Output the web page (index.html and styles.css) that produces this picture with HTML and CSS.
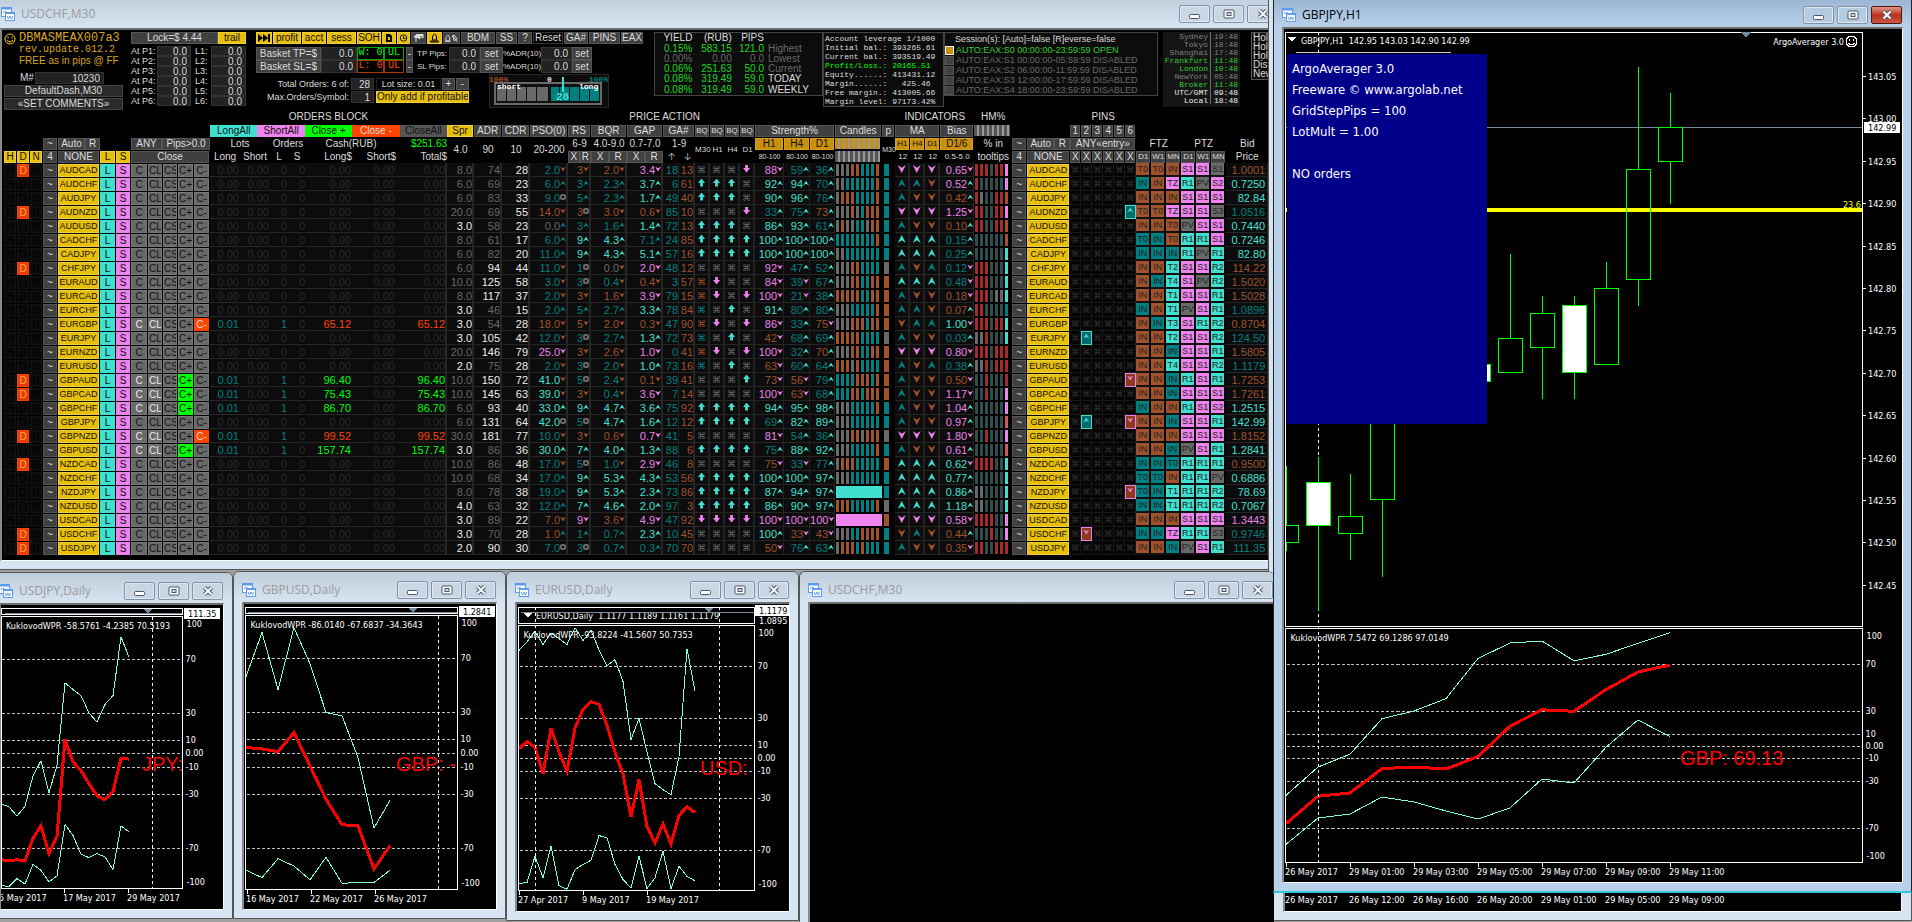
FILE: index.html
```html
<!DOCTYPE html>
<html lang="en">
<head>
  <meta charset="UTF-8" />
  <meta name="viewport" content="width=device-width, initial-scale=1" />
  <title>Forex Dashboard</title>
  <link rel="stylesheet" href="styles.css">
</head>
<body>

  <svg class="defs" aria-hidden="true">
    <symbol id="chartIcon" viewBox="0 0 14 14">
      <rect x="0.5" y="0.5" width="10" height="9" fill="#fff" stroke="#5b9bf0" />
      <path d="M0 1.5h11" stroke="#5b9bf0" stroke-width="2" />
      <path d="M2 6l1.500-2 1 1 1-1" stroke="#5b9bf0" fill="none" />
      <rect x="4.500" y="5.500" width="9" height="8" fill="#fff" stroke="#5b9bf0" />
      <path d="M4 6h10" stroke="#5b9bf0" stroke-width="2" />
      <path d="M6 9l1.500 3 1.500-3 1.500 3 1-3" stroke="#5b9bf0" fill="none" />
    </symbol>
    <symbol id="minIcon" viewBox="0 0 14 12">
      <rect x="1.500" y="6.500" width="10" height="4" rx="1" fill="#fff" stroke="#4d5566" />
    </symbol>
    <symbol id="maxIcon" viewBox="0 0 14 12">
      <rect x="2" y="2" width="10" height="8" rx="1" fill="#fff" stroke="#4d5566" />
      <rect x="5" y="4.500" width="4" height="3" fill="#cfdbe8" stroke="#4d5566" />
    </symbol>
    <symbol id="closeIcon" viewBox="0 0 14 12">
      <path d="M3.500 2.500l7 7m0-7l-7 7" stroke="#4d5566" stroke-width="4" />
      <path d="M3.500 2.500l7 7m0-7l-7 7" stroke="#fff" stroke-width="2" />
    </symbol>
    <symbol id="smiley" viewBox="0 0 12 12">
      <circle cx="6" cy="6" r="5" fill="none" stroke="currentColor" />
      <path d="M4 3.500v2M8 3.500v2M3 7.500q3 3 6 0" fill="none" stroke="currentColor" />
    </symbol>
  </svg>

  <main class="desktop">

    <!-- dashboard -->
    <section class="window win-dash">
      <header class="titlebar"><svg class="app-icon"><use href="#chartIcon" /></svg><h2>USDCHF,M30</h2></header>
      <div class="client dash">
        <div class="top">
          <div class="brand">
            <div class="name"><svg class="smile"><use href="#smiley" /></svg>DBMASMEAX007a3</div>
            <div class="rev">rev.update.012.2</div>
            <div class="free">FREE as in pips @ FF</div>
            <div class="magic"><label for="magic">M#</label><input id="magic" value="10230"></div>
            <button>DefaultDash,M30</button>
            <button>«SET COMMENTS»</button>
          </div>

          <div class="lock">
            <div class="lock-head"><button>Lock=$ 4.44</button><button class="gold">trail</button></div>
            <div class="lock-grid" id="lockGrid"></div>
          </div>

          <div class="controls">
            <div class="toolbar">
              <button class="gold" aria-label="Skip"><svg viewBox="0 0 12 10"><path d="M0 1l5 4-5 4zM5 1l5 4-5 4zM10 1h2v8h-2z" /></svg></button>
              <button class="gold">profit</button>
              <button class="gold">acct</button>
              <button class="gold">sess</button>
              <button class="gold">SOH</button>
              <button class="gold" aria-label="File"><svg viewBox="0 0 12 10"><path d="M3 1h4l2 2v6H3z" /><path d="M5 4h2v3H5z" fill="#e8bf08" /></svg></button>
              <button class="gold" aria-label="Clock"><svg viewBox="0 0 12 10"><circle cx="6" cy="5" r="3.500" fill="none" stroke="#000" /><path d="M6 3v2.500h2" fill="none" stroke="#000" /></svg></button>
              <button class="dim" aria-label="Announce"><svg viewBox="0 0 12 10"><path d="M1 4l3-3h7v4H9V3H8v3H6V5H4v4H3V5z" fill="#ddd" /></svg></button>
              <button class="gold" aria-label="Alarm"><svg viewBox="0 0 12 10"><path d="M4 7V4q0-2 2-3 2 1 2 3v3zM2 8h8v1H2z" fill="none" stroke="#000" /></svg></button>
              <button class="dim" aria-label="Alarms"><svg viewBox="0 0 16 10"><path d="M2 8V5q0-2 2-3 2 1 2 3v3zM1 8.500h6M9 3q2-2 3 0l2 3-3 2zM9 2l5 7" fill="none" stroke="#ddd" /></svg></button>
              <button>BDM</button>
              <button>SS</button>
              <button>?</button>
              <button class="bare">Reset</button>
              <button>GA#</button>
              <button>PINS</button>
              <button>EAX</button>
            </div>
            <div class="basket">
              <button>Basket TP=$</button><input aria-label="Basket TP" value="0.0">
              <output class="win">W: 0</output><output class="win">UL</output>
              <button class="spin" aria-label="Step W">-</button>
              <label for="tpPips">TP Pips:</label><input id="tpPips" value="0.0"><button>set</button>
              <label for="tpAdr">%ADR(10):</label><input id="tpAdr" value="0.0"><button>set</button>

              <button>Basket SL=$</button><input aria-label="Basket SL" value="0.0">
              <output class="lose">L: 0</output><output class="lose">UL</output>
              <button class="spin" aria-label="Step L">-</button>
              <label for="slPips">SL Pips:</label><input id="slPips" value="0.0"><button>set</button>
              <label for="slAdr">%ADR(10):</label><input id="slAdr" value="0.0"><button>set</button>
            </div>
            <div class="limits">
              <div class="limit-grid">
                <label for="maxTotal">Total Orders: 6 of:</label><input id="maxTotal" value="28">
                <div class="lot"><span>Lot size: 0.01</span><button>+</button><button>-</button></div>
                <label for="maxSym">Max.Orders/Symbol:</label><input id="maxSym" value="1">
                <button class="gold">Only add if profitable</button>
              </div>
              <svg class="gauge" viewBox="0 0 120 34">
                <rect x="0.5" y="0.5" width="119" height="33" fill="#0c0c0c" stroke="#262626" />
                <rect x="6" y="9" width="106" height="21" fill="#101010" stroke="#696969" stroke-width="2" />
                <g fill="#696969"><path d="M8 13h9v14H8zM18 13h9v14h-9zM28 13h9v14h-9zM38 13h9v14h-9zM48 13h11v14H48z" /></g>
                <g fill="#008080"><path d="M62 13h8v14h-8zM71 13h9v14h-9zM81 13h9v14h-9zM91 13h9v14h-9zM101 13h9v14h-9z" /></g>
                <path d="M74 3v15" stroke="#40e0d0" stroke-width="2" />
                <text x="0" y="8" fill="#a0522d">100%</text>
                <text x="58" y="8" fill="#eee">0</text>
                <text x="100" y="8" fill="#008080">100%</text>
                <text x="8" y="15" fill="#fff">short</text>
                <text x="90" y="15" fill="#fff">long</text>
                <text x="67" y="26" class="big" fill="#40e0d0">28</text>
              </svg>
            </div>
          </div>

          <table class="yield">
            <tr><th>YIELD</th><th>(RUB)</th><th>PIPS</th><th></th></tr>
            <tr><td>0.15%</td><td>583.15</td><td>121.0</td><td class="g">Highest</td></tr>
            <tr><td class="g">0.00%</td><td class="g">0.00</td><td class="g">0.0</td><td class="g">Lowest</td></tr>
            <tr><td>0.06%</td><td>251.63</td><td>50.0</td><td class="g">Current</td></tr>
            <tr><td>0.08%</td><td>319.49</td><td>59.0</td><td>TODAY</td></tr>
            <tr><td>0.08%</td><td>319.49</td><td>59.0</td><td>WEEKLY</td></tr>
          </table>

          <pre class="account">Account leverage 1/1000
Initial bal.: 393265.61
Current bal.: 393519.49
<b>Profit/Loss.: 20165.51</b>
Equity......: 413431.12
Margin......:   425.46
Free margin.: 413005.66
Margin level: 97173.42%</pre>

          <div class="sessions">
            <div class="head">Session(s): [Auto]=false [R]everse=false</div>
            <label class="open"><input type="checkbox" checked>AUTO:EAX:S0 00:00:00-23:59:59 OPEN</label>
            <label><input type="checkbox">AUTO:EAX:S1 00:00:00-05:59:59 DISABLED</label>
            <label><input type="checkbox">AUTO:EAX:S2 06:00:00-11:59:59 DISABLED</label>
            <label><input type="checkbox">AUTO:EAX:S3 12:00:00-17:59:59 DISABLED</label>
            <label><input type="checkbox">AUTO:EAX:S4 18:00:00-23:59:59 DISABLED</label>
          </div>

          <dl class="clocks">
            <dt>Sydney</dt><dd>19:48</dd>
            <dt>Tokyo</dt><dd>18:48</dd>
            <dt>Shanghai</dt><dd>17:48</dd>
            <dt class="on">Frankfurt</dt><dd class="on">11:48</dd>
            <dt class="on">London</dt><dd class="on">10:48</dd>
            <dt>NewYork</dt><dd>05:48</dd>
            <dt class="on">Broker</dt><dd class="on">11:48</dd>
            <dt class="me">UTC/GMT</dt><dd class="me">09:48</dd>
            <dt class="me">Local</dt><dd class="me">18:48</dd>
          </dl>

          <ul class="side-menu"><li>Hol</li><li>Hol</li><li>Hol</li><li>Dis</li><li>New</li></ul>
        </div>

        <table class="grid">
          <colgroup id="cols"></colgroup>
          <thead>
            <tr class="titles">
              <td colspan="12"></td><th colspan="7">ORDERS BLOCK</th><th colspan="17">PRICE ACTION</th>
              <td></td><th colspan="4">INDICATORS</th><th>HM%</th><td colspan="2"></td><th colspan="6">PINS</th><td colspan="7"></td>
            </tr>
            <tr class="r1">
              <td colspan="12"></td>
              <td colspan="7"><div class="close-all">
                <button class="long">LongAll</button><button class="short">ShortAll</button><button class="plus">Close +</button><button class="minus">Close -</button><button class="all">CloseAll</button>
              </div></td>
              <td><button class="gold">Spr</button></td><td><button>ADR</button></td><td><button>CDR</button></td>
              <td><button>PSO(0)</button></td><td><button>RS</button></td><td><button>BQR</button></td><td><button>GAP</button></td>
              <td colspan="2"><button>GA#</button></td>
              <td><button class="tiny">BQ</button></td><td><button class="tiny">BQ</button></td><td><button class="tiny">BQ</button></td><td><button class="tiny">BQ</button></td>
              <td colspan="3"><button>Strength%</button></td><td><button>Candles</button></td><td><button>p</button></td>
              <td colspan="3"><button>MA</button></td><td><button>Bias</button></td><td><i class="stripes"></i></td><td colspan="2"></td>
              <td><button>1</button></td><td><button>2</button></td><td><button>3</button></td><td><button>4</button></td><td><button>5</button></td><td><button>6</button></td>
              <td colspan="7"></td>
            </tr>
            <tr class="r2">
              <td colspan="3"></td><td><button>~</button></td>
              <td><div class="pair wide"><button>Auto</button><button>R</button></div></td><td colspan="2"></td>
              <td colspan="5"><div class="pair any"><button>ANY</button><button>Pips&gt;0.0</button></div></td>
              <th colspan="2">Lots</th><th colspan="2">Orders</th><th colspan="2">Cash(RUB)</th><th class="sum">$251.63</th>
              <th rowspan="2">4.0</th><th rowspan="2">90</th><th rowspan="2">10</th><th rowspan="2">20-200</th>
              <th>6-9</th><th>4.0-9.0</th><th>0.7-7.0</th><th colspan="2">1-9</th>
              <th rowspan="2" class="tiny">M30</th><th rowspan="2" class="tiny">H1</th><th rowspan="2" class="tiny">H4</th><th rowspan="2" class="tiny">D1</th>
              <td><button class="amber">H1</button></td><td><button class="amber">H4</button></td><td><button class="amber">D1</button></td>
              <td><i class="stripes gold-s"></i></td><th rowspan="2" class="small">M30</th>
              <td><button class="amber tiny">H1</button></td><td><button class="amber tiny">H4</button></td><td><button class="amber tiny">D1</button></td>
              <td><button class="amber">D1/6</button></td><th>% in</th>
              <td><button>~</button></td><td><div class="pair wide"><button>Auto</button><button>R</button></div></td>
              <td colspan="6"><button>ANY«entry»</button></td><th colspan="3">FTZ</th><th colspan="3">PTZ</th><th>Bid</th>
            </tr>
            <tr class="r3">
              <td><button class="gold">H</button></td><td><button class="gold">D</button></td><td><button class="gold">N</button></td>
              <td><button>4</button></td><td><button>NONE</button></td><td><button class="gold">L</button></td><td><button class="gold">S</button></td>
              <td colspan="5"><button>Close</button></td>
              <th>Long</th><th>Short</th><th>L</th><th>S</th><th class="end">Long$</th><th class="end">Short$</th><th class="end">Total$</th>
              <td><div class="pair"><button>X</button><button>R</button></div></td><td><div class="pair"><button>X</button><button>R</button></div></td><td><div class="pair"><button>X</button><button>R</button></div></td>
              <th>🡡</th><th>🡣</th>
              <th class="small">80-100</th><th class="small">80-100</th><th class="small">80-100</th><td><i class="stripes"></i></td>
              <th class="tiny">12</th><th class="tiny">12</th><th class="tiny">12</th><th class="tiny">0.5-5.0</th><th>tooltips</th>
              <td><button>4</button></td><td><button>NONE</button></td>
              <td><button>X</button></td><td><button>X</button></td><td><button>X</button></td><td><button>X</button></td><td><button>X</button></td><td><button>X</button></td>
              <td><button class="tiny">D1</button></td><td><button class="tiny">W1</button></td><td><button class="tiny">MN</button></td><td><button class="tiny">D1</button></td><td><button class="tiny">W1</button></td><td><button class="tiny">MN</button></td>
              <th>Price</th>
            </tr>
          </thead>
          <tbody id="rows"></tbody>
        </table>
      </div>
    </section>

    <section class="window win-jpy">
      <header class="titlebar"><svg class="app-icon"><use href="#chartIcon" /></svg><h2>USDJPY,Daily</h2></header>
      <div class="client"><svg class="chart" id="usdjpy"></svg></div>
    </section>

    <section class="window win-gbp">
      <header class="titlebar"><svg class="app-icon"><use href="#chartIcon" /></svg><h2>GBPUSD,Daily</h2></header>
      <div class="client"><svg class="chart" id="gbpusd"></svg></div>
    </section>

    <section class="window win-eur">
      <header class="titlebar"><svg class="app-icon"><use href="#chartIcon" /></svg><h2>EURUSD,Daily</h2></header>
      <div class="client"><svg class="chart" id="eurusd"></svg></div>
    </section>

    <!-- only its time axis shows under the active chart -->
    <section class="window win-back">
      <div class="client"><div class="axis"><span>26 May 2017</span><span>26 May 12:00</span><span>26 May 16:00</span><span>26 May 20:00</span><span>29 May 01:00</span><span>29 May 05:00</span><span>29 May 09:00</span></div></div>
    </section>

    <section class="window win-blank">
      <header class="titlebar"><svg class="app-icon"><use href="#chartIcon" /></svg><h2>USDCHF,M30</h2></header>
      <div class="client"></div>
    </section>

    <section class="window win-main active">
      <header class="titlebar"><svg class="app-icon"><use href="#chartIcon" /></svg><h2>GBPJPY,H1</h2></header>
      <div class="client">
        <svg class="chart" id="gbpjpy"></svg>
        <div class="note">
          <p>ArgoAverager 3.0</p>
          <p>Freeware © www.argolab.net</p>
          <p>GridStepPips = 100</p>
          <p>LotMult = 1.00</p>
          <p>&nbsp;</p>
          <p>NO orders</p>
        </div>
      </div>
    </section>

  </main>

  <script src="script.js"></script>
</body>
</html>
```
FILE: styles.css
```css
* {
  box-sizing: border-box;
}

body {
  margin: 0;
  background: #a0a0a0;
  color: #ddd;
  font-family: "Liberation Sans", Arial, sans-serif;
  font-size: 10px;
  line-height: 12px;
}

.defs {
  display: none;
}

.desktop {
  position: relative;
  height: 100vh;
  overflow: hidden;
}

/* windows */
.window {
  position: absolute;
  display: flex;
  flex-direction: column;
  padding: 0 8px 8px;
  background: #d7e4f2;
  border: 1px solid #555;
  border-radius: 6px 6px 0 0;
}

.win-dash { left: -8px; top: -6px; width: 1296px; height: 576px; }
.win-jpy { left: -10px; top: 572px; width: 243px; height: 347px; }
.win-gbp { left: 233px; top: 571px; width: 273px; height: 348px; }
.win-eur { left: 506px; top: 571px; width: 293px; height: 350px; }
.win-blank { left: 799px; top: 571px; width: 475px; height: 370px; padding-right: 0; border-right: 0; }
.win-back { left: 1268px; right: 0; top: -10px; bottom: 1px; padding: 0 9px 8px 14px; }
.win-main { left: 1273px; right: 0; top: -4px; height: 897px; }

.titlebar {
  display: flex;
  flex: 0 0 30px;
  align-items: center;
  gap: 6px;
  margin: 0 -8px;
  padding: 5px 9px 0 8px;
  border-radius: 6px 6px 0 0;
  background: linear-gradient(#bfcddb, #d7e4f2);
}

.win-dash .titlebar {
  flex-basis: 33px;
}

.win-blank .titlebar {
  margin-right: 0;
  padding-right: 1px;
}

.titlebar h2 {
  flex: 1;
  margin: 0;
  color: #9a9a9a;
  font: 12px/16px "Open Sans", "Noto Sans", sans-serif;
}

.app-icon {
  width: 14px;
  height: 14px;
}

.win-buttons {
  display: flex;
  gap: 3px;
}

.win-buttons button {
  display: flex;
  align-items: center;
  justify-content: center;
  width: 31px;
  height: 18px;
  border: 1px solid #8291a8;
  border-radius: 2px;
  background: #c9d6e4;
  box-shadow: inset 0 0 0 1px #dfe8f2;
}

.win-buttons svg {
  width: 14px;
  height: 12px;
}

.client {
  position: relative;
  flex: 1;
  min-height: 0;
  overflow: hidden;
  background: #000;
  border: 1px solid #fff;
  border-top: 2px solid #6e6e6e;
  border-left: 2px solid #8a8a8a;
}

.win-blank .client {
  border-right: 0;
}

.window.active {
  background: #b9d1ea;
  border-color: #222;
  border-bottom: 2px solid #30c8e0;
}

.active .titlebar {
  background: linear-gradient(#98b3d1, #b9d1ea);
}

.active .titlebar h2 {
  color: #000;
}

.active .win-buttons button {
  background: #b5cbe2;
}

.active .win-buttons button:last-child {
  border-color: #5a1410;
  background: linear-gradient(#e09a8c, #b8321c 50%, #c85840);
  box-shadow: none;
}

.chart {
  display: block;
  width: 100%;
  height: 100%;
  shape-rendering: crispEdges;
  font-family: "DejaVu Sans Condensed", "Noto Sans", sans-serif;
  font-size: 9px;
}

.chart .label {
  font-family: "Liberation Sans", Arial, sans-serif;
  font-size: 20px;
  fill: #f00;
}

.note {
  position: absolute;
  left: 3px;
  top: 25px;
  width: 200px;
  height: 370px;
  padding: 4px 5px;
  background: #00008b;
  color: #fff;
  font: 13px/21px "DejaVu Sans Condensed", "Noto Sans", sans-serif;
}

.note p {
  margin: 0;
  white-space: nowrap;
}

.win-back .client {
  display: flex;
  align-items: flex-end;
}

.axis {
  display: flex;
  color: #fff;
  font: 9px/21px "DejaVu Sans Condensed", "Noto Sans", sans-serif;
}

.axis span {
  width: 64px;
  white-space: nowrap;
}

/* dashboard controls */
button, input, output {
  margin: 0;
  padding: 0;
  border: 1px solid #555;
  border-radius: 0;
  background: #404040;
  color: #ddd;
  font-family: inherit;
  font-size: 10px;
  line-height: 10px;
  white-space: nowrap;
  overflow: hidden;
}

input {
  width: 100%;
  height: 100%;
  min-width: 0;
  padding-right: 3px;
  border-color: #333;
  background: #222;
  text-align: right;
}

button.gold {
  border-color: #f0d040;
  background: #e8bf08;
  color: #111;
}

button.amber {
  border-color: #d8a020;
  background: #c8900c;
  color: #111;
}

.dash {
  margin-left: -1px;
}

.top {
  display: flex;
  align-items: flex-start;
  height: 80px;
  padding: 2px 0 0 2px;
}

.top > * {
  flex-shrink: 0;
}

.brand {
  display: flex;
  flex-direction: column;
  width: 119px;
  margin-right: 8px;
  color: #daa520;
}

.brand .name {
  display: flex;
  align-items: center;
  gap: 3px;
  height: 13px;
  font: 12px/13px "Liberation Mono", monospace;
}

.smile {
  width: 12px;
  height: 12px;
  color: #ffd700;
}

.brand .rev {
  height: 10px;
  padding-left: 15px;
  font: 10px/9px "Liberation Mono", monospace;
}

.brand .free {
  height: 17px;
  padding-left: 15px;
}

.magic {
  display: flex;
  width: 100px;
  height: 12px;
  margin-bottom: 1px;
  padding-left: 16px;
  gap: 1px;
  color: #ddd;
}

.brand button {
  height: 12px;
  margin-bottom: 1px;
  border-color: #444;
  background: #2a2a2a;
}

.lock {
  width: 115px;
  margin-right: 10px;
}

.lock-head {
  display: grid;
  grid-template-columns: 87px 28px;
  height: 12px;
  margin-bottom: 2px;
}

.lock-grid {
  display: grid;
  grid-template-columns: 26px 34px 20px 35px;
  grid-auto-rows: 10px;
  font-size: 9px;
  line-height: 11px;
  white-space: nowrap;
}

.lock-grid label:nth-of-type(even) {
  padding-left: 4px;
}

.controls {
  width: 388px;
  margin-right: 10px;
}

.toolbar {
  display: grid;
  grid-template-columns: 17px 29px 25px 30px 25px 15px 14px 16px 16px 18px 35px 22px 15px 31px 25px 32px 23px;
  height: 12px;
  margin-bottom: 3px;
}

.toolbar button {
  margin-right: 1px;
}

.toolbar svg {
  display: block;
  width: 100%;
  height: 10px;
}

.toolbar .bare {
  border-color: #333;
  background: #000;
}

.basket {
  display: grid;
  grid-template-columns: 65px 36px 27px 20px 13px 32px 31px 23px 38px 31px 20px;
  grid-auto-rows: 13px;
}

.basket label {
  font-size: 8px;
  line-height: 13px;
}

.basket output {
  border-color: #0a0;
  background: #000;
  color: #0f0;
  font-family: "Liberation Mono", monospace;
  text-align: center;
}

.basket output.lose {
  border-color: #a30;
  color: #ff4500;
}

.basket .spin {
  margin: 0 4px 0 2px;
}

.limits {
  display: flex;
  gap: 20px;
}

.limit-grid {
  display: grid;
  grid-template-columns: 93px 23px 93px;
  grid-auto-rows: 12px;
  gap: 1px 2px;
  padding-top: 5px;
  text-align: right;
  font-size: 9px;
  line-height: 12px;
}

.lot {
  display: grid;
  grid-template-columns: 65px 13px 13px;
  gap: 1px;
}

.lot span {
  border: 1px solid #222;
  line-height: 10px;
  text-align: center;
}

.gauge {
  width: 120px;
  height: 34px;
  margin-top: 1px;
  font: bold 8px "Liberation Mono", monospace;
}

.gauge .big {
  font-size: 11px;
}

.yield {
  width: 169px;
  height: 64px;
  border: 1px solid #444;
  border-collapse: collapse;
  background: #0c0c0c;
  color: #1fd71f;
  line-height: 10px;
}

.yield th, .yield td {
  padding: 0;
  text-align: right;
  font-weight: normal;
}

.yield th {
  color: #ddd;
}

.yield td:last-child {
  padding-left: 4px;
  color: #ddd;
  text-align: left;
}

.yield tr td.g {
  color: #696969;
}

.account {
  width: 121px;
  height: 75px;
  margin: 0;
  padding: 1px 0 0 1px;
  border: 1px solid #444;
  background: #0c0c0c;
  font: 8px/9px "Liberation Mono", monospace;
}

.account b {
  color: #0f0;
  font-weight: normal;
}

.sessions {
  width: 214px;
  height: 64px;
  border: 1px solid #444;
  background: #0c0c0c;
  color: #696969;
  font-size: 9px;
  line-height: 10px;
}

.sessions .head {
  padding-left: 10px;
  color: #ddd;
  line-height: 12px;
}

.sessions label {
  display: flex;
  align-items: center;
  gap: 2px;
}

.sessions .open {
  color: #32cd32;
}

.sessions input {
  width: 9px;
  height: 9px;
  padding: 0;
  appearance: none;
  border-color: #555;
  background: #404040;
}

.sessions input:checked {
  border-color: #eee;
  background: #c8900c;
}

.clocks {
  display: grid;
  grid-template-columns: 45px 32px;
  grid-auto-rows: 8px;
  height: 75px;
  margin: 0 11px 0 5px;
  background: #151515;
  color: #808080;
  font: 8px/9px "Liberation Mono", monospace;
}

.clocks dt {
  text-align: right;
}

.clocks dd {
  margin: 0 0 0 2px;
  padding-left: 3px;
  border-left: 1px solid #696969;
}

.clocks .on { color: #32cd32; }
.clocks .me { color: #eee; }

.side-menu {
  width: 40px;
  height: 48px;
  margin: 0;
  padding: 0 1px;
  border: 1px solid #555;
  background: #0c0c0c;
  list-style: none;
  line-height: 9px;
}

/* pair table */
.grid {
  width: 1264px;
  margin-left: 2px;
  border-spacing: 0;
  table-layout: fixed;
  font-size: 10px;
}

.grid th, .grid td {
  height: 13px;
  padding: 0;
  overflow: hidden;
  font-weight: normal;
  line-height: 12px;
  white-space: nowrap;
}

.grid thead th {
  overflow: visible;
  text-align: center;
}

.grid .titles th, .grid .titles td {
  height: 14px;
}

.grid button {
  display: block;
  width: calc(100% - 1px);
  height: 12px;
  text-align: center;
}

.grid .tiny {
  font-size: 8px;
}

.grid .small {
  font-size: 7px;
}

.grid thead .end {
  text-align: right;
}

.grid thead .sum {
  color: #0f0;
  text-align: right;
}

.close-all, .pair {
  display: flex;
}

.pair.wide button:first-child { flex: 0 0 27px; }
.pair.any button:first-child { flex: 0 0 31px; }

.grid .long { border-color: #40e0d0; background: #40e0d0; color: #111; }
.grid .short { border-color: #ee82ee; background: #ee82ee; color: #111; }
.grid .plus { border-color: #0f0; background: #0f0; color: #111; }
.grid .minus { border-color: #ff4500; background: #ff4500; color: #ddd; }
.grid .all { color: #111; background: #555; }

.stripes {
  display: block;
  width: calc(100% - 2px);
  height: 11px;
  background: repeating-linear-gradient(90deg, #555 0 3px, #999 3px 5px);
}

.stripes.gold-s {
  background: repeating-linear-gradient(90deg, #c8900c 0 3px, #999 3px 5px);
}

tbody .num {
  border-right: 1px solid #222;
  border-bottom: 1px solid #262626;
  background: #0c0c0c;
  font-size: 11px;
  text-align: right;
}

.grid tbody td {
  height: 14px;
}

.grid tbody button {
  height: 13px;
  line-height: 11px;
}

.grid tbody .sym {
  font-size: 9px;
}

tbody .num.end {
  border-right: 2px solid #262626;
}

tbody .num.order {
  border-right-color: #0c0c0c;
}

.grid .hdn { border-color: #111; background: #0c0c0c; color: #000; }
.grid .hdn.lit { border-color: #ff4500; background: #e83808; color: #ffb040; }
.grid .off { border-color: #787878; background: #696969; color: #111; }
.grid .off.lit { color: #eee; }

.c-w { color: #eee; }
.c-g { color: #696969; }
.c-t { color: #008080; }
.c-T { color: #40e0d0; }
.c-o { color: #a0522d; }
.c-v { color: #ee82ee; }
.c-z { color: #2a2a2a; }
.c-p { color: #0f0; }
.c-m { color: #ff4500; }

.mark {
  display: inline-block;
  width: 6px;
  height: 5px;
  margin-bottom: 2px;
  background: currentColor;
}

.up { clip-path: polygon(50% 0, 100% 100%, 50% 65%, 0 100%); }
.down { clip-path: polygon(50% 100%, 100% 0, 50% 35%, 0 0); }
.ring { height: 6px; border: 2px double #696969; background: none; border-radius: 2px; }

tbody .ico {
  border-right: 2px solid #222;
  border-bottom: 1px solid #262626;
  background: #0c0c0c;
  font: 9px "DejaVu Sans", sans-serif;
  text-align: center;
}

.arrow-up, .arrow-down {
  display: inline-block;
  width: 7px;
  height: 8px;
  background: currentColor;
  clip-path: polygon(50% 0, 100% 55%, 70% 55%, 70% 100%, 30% 100%, 30% 55%, 0 55%);
}

.arrow-down {
  clip-path: polygon(50% 100%, 100% 45%, 70% 45%, 70% 0, 30% 0, 30% 45%, 0 45%);
}

tbody .ico .mark {
  width: 8px;
  height: 8px;
  margin: 1px 0 0;
}

.bars {
  display: flex;
  gap: 2px;
  height: 12px;
  padding-left: 1px;
}

.bars i { width: 3px; }
.bars.one i { width: 5px; margin-left: 1px; }
.bars.full i { width: 46px; }

.b-g { background: #696969; }
.b-t { background: #008080; }
.b-T { background: #40e0d0; }
.b-o { background: #a0522d; }
.b-v { background: #ee82ee; }
.b-r { background: #a52a2a; }
.b-s { background: #2f4f4f; }
.b-c { background: #cd5c5c; }

tbody .pin {
  background: #050505;
  border-right: 1px solid #181818;
  border-bottom: 1px solid #181818;
  color: #303030;
  font: 9px "DejaVu Sans", sans-serif;
  text-align: center;
}

tbody .up-pin { outline: 1px solid #40e0d0; outline-offset: -1px; background: #006b6b; color: #40e0d0; }
tbody .down-pin { outline: 1px solid #ee82ee; outline-offset: -1px; background: #8b3a1a; color: #ee82ee; }

.zone {
  border-right: 2px solid #000;
  border-bottom: 2px solid #111;
  color: #222;
  font-size: 9px;
  text-align: center;
}

tbody .price {
  padding-right: 2px;
}
```
FILE: script.js
```js
// window buttons
document.querySelectorAll('.titlebar').forEach(bar => {
  const box = document.createElement('div');
  box.className = 'win-buttons';
  box.innerHTML = ['min', 'max', 'close'].map(n =>
    `<button aria-label="${n}"><svg><use href="#${n}Icon" /></svg></button>`).join('');
  bar.append(box);
});

// lock levels
let lock = '';
for (let i = 1; i <= 6; i++) {
  lock += `<label for="p${i}">At P${i}:</label><input id="p${i}" value="0.0">`;
  lock += `<label for="l${i}">L${i}:</label><input id="l${i}" value="0.0">`;
}
document.getElementById('lockGrid').innerHTML = lock;

// pair table
const widths = [13, 13, 13, 15, 42, 16, 15, 17, 15, 15, 16, 16,
  30, 30, 18, 18, 46, 44, 51,
  27, 28, 28, 38, 23, 36, 36, 16, 16, 15, 15, 15, 15,
  29, 26, 25, 47, 13, 15, 15, 15, 34, 38,
  15, 43, 11, 11, 11, 11, 11, 11, 15, 15, 15, 15, 15, 15, 42];
document.getElementById('cols').innerHTML = widths.map(w => `<col style="width:${w}px">`).join('');

// symbol, values, bq, strength, candles, p, ma, bias, heat, pins, zones, bid, cash
const pairs = [
  'AUDCAD! g8.0 g74 w28 t2.0vo o3v o2.0v v3.4v 18 13 xxxd v88v t59^ t36^ gggoottto t vvv v0.65v rrrsrrv ...... oT0,oT0,oIN,vS1,vS1,gS1 o1.0001',
  'AUDCHF g6.0 g69 w23 t6.0^ t3^ t2.3^ T3.7^ 6 61 uuux T92^ T94^ t70^ ggtttttto t tto v0.52^ rsssssv ...... tIN,oIN,vTZ,TR1,gPV,vS2 T0.7250',
  'AUDJPY g6.0 g83 w33 t9.0*g t5^ t2.3^ T1.7^ 49 40 uuux T90^ T96^ t76^ goootttto t too o0.42^ rgssrro ...... oIN,oIN,oIN,vS1,vS1,vS1 T82.84',
  'AUDNZD! g20.0 g69 w55 o14.0v o3*g o3.0v o0.6v 85 10 xxxd t33^ t75^ o73^ gggogtooo t vvv v1.25v rrssrrv .....U oT0,oT0,vTZ,vS1,vS1,gS3 t1.0516',
  'AUDUSD w3.0 g58 w23 g0.0^t t3^ t1.6^ T1.4^ 72 13 uuux T86^ T93^ t61^ goggttgoo t too o0.10^ rrssrro ...... oIN,oIN,oT0,gPV,vS1,vS1 T0.7440',
  'CADCHF g8.0 g61 w17 t6.0^ T9^ T4.3^ t7.1^ 24 85 uuuu T100^ T100^ T100^ tttttttto t TTT t0.15^ sssssso ...... tT0,tIN,oT0,TR1,TR1,vS1 T0.7246',
  'CADJPY g6.0 g82 w20 t11.0^ T9^ T4.3^ T5.1^ 57 16 uuuu T100^ T100^ T100^ ggttttttt t TTT t0.25^ ssssssT ...... tIN,tIN,tIN,TR1,gPV,TR1 T82.80',
  'CHFJPY! g6.0 w94 w44 t11.0vo t1*g g0.0vo v2.0v 48 12 xxxx v92v t47^ t52^ gggootttt g tot t0.12v rrrsssT ...... oIN,oIN,TT2,vS1,vS1,TR2 o114.22',
  'EURAUD g10.0 w125 w58 t3.0vo t3*g t0.4vo o0.4v 3 57 odxx v84v t39v t67^ gggoottoo o TTT t0.48v rrrsssT ...... oIN,tIN,TT4,vS1,gPV,TR2 o1.5020',
  'EURCAD g8.0 w117 w37 t2.0vo o3v o1.6v v3.9v 79 15 odxd v100v t21v t38^ ooooottoo o too o0.18v rrrsggT ...... oIN,oIN,TT1,vS1,vS1,TR1 o1.5028',
  'EURCHF w3.0 g46 w15 t2.0^ t5^ t2.7^ T3.3^ 78 84 txux T91^ t80^ t80^ gggttttto o tto o0.07^ rrsssst ...... tIN,oIN,TT1,gPV,vS1,TR1 t1.0896',
  'EURGBP w3.0 g54 w28 o18.0v o5v o2.0v o0.3v 47 90 odxd v86v t33^ o75v gggoootoo o ott T1.00v rrrsrrT ...... oIN,tIN,TT3,vS1,TR1,TR2 o0.8704 -65.12',
  'EURJPY w3.0 w105 w42 t12.0vo t3*g t2.7^ T1.3^ 72 73 txux o42v t68^ t69^ oooootttt g too t0.03^ ggrsssT .U.... oIN,oIN,TT2,vS1,vS1,TR2 t124.50',
  'EURNZD g20.0 w146 w79 v25.0v o3v o2.6v v1.0v 0 41 odxd v100v t32^ o70^ gggoottoo o vvv v0.80v rrrsrrr ...... oIN,oIN,tIN,vS1,vS1,TR1 o1.5805',
  'EURUSD w2.0 g75 w28 t2.0vo t3*g t2.0vo T1.0^ 73 16 txux o63v t60^ t64^ ooogotttt o tot t0.38^ ggrsrrr ...... oIN,oIN,TT4,vS1,vS1,TR2 t1.1179',
  'GBPAUD! g10.0 w150 w72 T41.0vo t5*g t2.4vo o0.1v 39 41 xxxu o73v o56v t79^ ttttoooto o too o0.50v ssrsssr .....D oIN,oIN,tIN,TR1,vS1,TR1 o1.7253 +96.40',
  'GBPCAD! g10.0 w145 w63 T39.0vo o3v t0.4vo v3.6v 7 14 xxxx v100v o63v t68^ tttootooo o too v1.17v ssrsssv ...... oIN,oIN,tIN,vS1,vS1,vS1 o1.7261 +75.43',
  'GBPCHF g6.0 w93 w40 T33.0^ T9^ T4.7^ T3.6^ 75 92 uuuu T94^ T95^ T98^ gggttttto t too v1.04^ ssssssv ...... tIN,oIN,oIN,TR1,vS1,vS2 T1.2515 +86.70',
  'GBPJPY g6.0 w131 w64 T42.0*g t5*g T4.7^ T1.6^ 12 12 uuuu t69^ T82^ T89^ gggtttttt t too v0.97^ ssssssc .U...D oIN,oIN,tIN,vS1,vS1,TR1 T142.99',
  'GBPNZD! g30.0 w181 w77 t10.0vo o3v o0.6v v0.7v 41 5 xxxx v81v t54^ t36^ gggoogooo g vvv v1.80v ssrsssv ...... oIN,oIN,oIN,vS1,vS1,vS1 o1.8152 -99.52',
  'GBPUSD w3.0 g86 w36 T30.0^ T7^ T4.0^ T1.3^ 88 6 uuuu t75^ T88^ T92^ gggttttto t too v0.61^ ssssssc ...... oIN,oIN,tIN,gPV,vS1,TR1 T1.2841 +157.74',
  'NZDCAD! g10.0 g86 w48 t17.0vo t5*g t1.0vo v2.9v 46 8 xxxx o75v t33v t77^ gooottttto o TTT T0.62v rrrrssT ...... tIN,tIN,tT0,TR1,TR1,TR1 o0.9500',
  'NZDCHF g10.0 g68 w34 t17.0^ T9^ T5.3^ T4.3^ 53 56 uuuu T100^ T100^ T97^ gggtttttt t TTT T0.77^ ssssssT ...... tT0,tT0,oIN,TR1,TR1,gPV T0.6886',
  'NZDJPY g8.0 g78 w38 t19.0^ T9^ T5.3^ T2.3^ 73 86 uuuu T87^ T94^ T97^ T t TTT T0.86^ ggssssT .....D tT0,tIN,TT1,TR1,TR1,TR2 T78.69',
  'NZDUSD w4.0 g63 w32 t12.0^ T7^ T4.6^ T2.0^ 97 3 uuuu T86^ T90^ T97^ ooottttto g TTT T1.18^ ggssssT ...... tIN,tIN,TT1,TR1,TR1,TR2 T0.7067',
  'USDCAD w3.0 g89 w22 o7.0v v9v o3.6v v4.9v 47 92 dddd v100v v100v v100v v o vvv v0.58v rrrrssv ...... oIN,oIN,oIN,vS1,vS1,vS1 v1.3443',
  'USDCHF! w3.0 g70 w28 o1.0^t t1^ t0.7^ T2.3^ 10 45 xxxx T100^ o33v o43v gggttoooo t oto o0.44^ sssrssv .D.... tIN,tIN,vTZ,TR1,TR1,gS3 t0.9746',
  'USDJPY! w2.0 w90 w30 t7.0*g t3*g t0.7^ t0.3^ 70 70 xxxx o50v t76^ t63^ goootottt t too o0.35v rrssrrr ...... oIN,oIN,tIN,gPV,vS1,TR1 t111.35'
];

const shape = { '^': 'up', 'v': 'down', '*': 'ring' };

// "t2.0vo" = teal value, down mark, orange mark
function num(token, byDirection, extra = '') {
  const [, color, value, mark, own] = token.match(/^([a-zA-Z])([\d.]+)([v^*]?)(\w?)$/);
  let tint = own || color;
  if (byDirection) tint = mark === '^' ? 'T' : 'v';
  const tail = mark ? `<i class="mark ${shape[mark]} c-${tint}"></i>` : '';
  return `<td class="num ${extra}"><span class="c-${color}">${value}</span>${tail}</td>`;
}

function order(value, color, extra = 'order') {
  return `<td class="num ${extra} c-${color}">${value}</td>`;
}

function bars(codes, cls = '') {
  return `<td><div class="bars ${cls}">${[...codes].map(c => `<i class="b-${c}"></i>`).join('')}</div></td>`;
}

function bq(c) {
  if (c === 'u') return '<td class="ico c-T"><i class="arrow-up"></i></td>';
  if (c === 'd') return '<td class="ico c-v"><i class="arrow-down"></i></td>';
  return `<td class="ico c-${c === 'x' ? 'g' : c}">⌘</td>`;
}

function pin(c) {
  if (c === 'U') return '<td class="pin up-pin"><i class="mark up"></i></td>';
  if (c === 'D') return '<td class="pin down-pin"><i class="mark down"></i></td>';
  return '<td class="pin">⌘</td>';
}

document.getElementById('rows').innerHTML = pairs.map(line => {
  const f = line.split(' ');
  const lit = f[0].endsWith('!') ? 'lit' : '';
  const sym = f[0].replace('!', '');
  const cash = f[22];
  const win = cash && cash[0] === '+';
  const col = cash ? (win ? 'p' : 'm') : 'z';
  const sum = cash ? cash.slice(1) : '0.00';
  const on = cash ? 'lit' : '';
  const teal = cash ? 't' : 'z';

  let html = `<td><button class="hdn">H</button></td><td><button class="hdn ${lit}">D</button></td><td><button class="hdn">N</button></td>`;
  html += `<td><button>~</button></td><td><button class="gold sym">${sym}</button></td>`;
  html += '<td><button class="long">L</button></td><td><button class="short">S</button></td>';
  html += `<td><button class="off ${on}">C</button></td><td><button class="off ${on}">CL</button></td><td><button class="off">CS</button></td>`;
  html += `<td><button class="${win ? 'plus' : 'off'}">C+</button></td><td><button class="${cash && !win ? 'minus' : 'off'}">C-</button></td>`;
  html += order(cash ? '0.01' : '0.00', teal) + order('0.00', 'z');
  html += order(cash ? 1 : 0, teal) + order(0, 'z');
  html += order(sum, col) + order('0.00', 'z') + order(sum, col, 'end');
  html += f.slice(1, 8).map(t => num(t, false, 'end')).join('');
  html += num('t' + f[8]) + num('o' + f[9], false, 'end');
  html += [...f[10]].map(bq).join('');
  html += f.slice(11, 14).map(t => num(t, true)).join('');
  html += bars(f[14].slice(0, 9), f[14].length === 1 ? 'full' : '') + bars(f[15], 'one');
  html += [...f[16]].map(c => `<td class="ico c-${c}"><i class="mark ${/t/i.test(c) ? 'up' : 'down'}"></i></td>`).join('');
  html += num(f[17], true) + bars(f[18]);
  html += `<td><button>~</button></td><td><button class="gold sym">${sym}</button></td>`;
  html += [...f[19]].map(pin).join('');
  html += f[20].split(',').map(z => `<td class="zone b-${z[0]}">${z.slice(1)}</td>`).join('');
  html += num(f[21], false, 'price');
  return `<tr>${html}</tr>`;
}).join('');

// charts
const levels = [70, 30, 10, 0, -10, -30, -70];

function text(x, y, s, fill = '#fff', attr = '') {
  return `<text x="${x}" y="${y}" fill="${fill}" ${attr}>${s}</text>`;
}

function wpr(id, o) {
  const y = v => o.zero - v * o.unit;
  const line = (data, color, w) =>
    `<polyline points="${data.map((v, i) => `${o.x0 + i * o.step},${y(v).toFixed(1)}`).join(' ')}" fill="none" stroke="${color}" stroke-width="${w}" />`;
  let s = `<clipPath id="${id}Clip"><rect x="${o.left}" y="${o.top}" width="${o.right - o.left}" height="${o.bottom - o.top}" /></clipPath>`;
  s += o.before || '';
  s += `<g clip-path="url(#${id}Clip)">`;
  levels.forEach(v => {
    s += `<path d="M${o.left + 1} ${Math.round(y(v)) + 0.5}H${o.right}" stroke="#c0c0c0" stroke-dasharray="3 2" />`;
  });
  s += line(o.high, '#7fffd4', 1) + line(o.low, '#7fffd4', 1) + line(o.mid, '#f00', 3);
  s += text(o.labelX, o.labelY, o.label, '#f00', 'class="label"');
  s += '</g>';
  o.vlines.forEach(x => {
    s += `<path d="M${x} ${o.vtop || o.top}V${o.bottom}" stroke="#fff" stroke-dasharray="3 3" />`;
  });
  s += text(o.left + 5, o.top + 12, o.caption);
  s += `<rect x="${o.left}" y="${o.top}" width="${o.right - o.left}" height="${o.bottom - o.top}" fill="none" stroke="#fff" />`;
  s += `<rect x="${o.left}" y="3.5" width="${o.right - o.left}" height="${o.top - 5.5}" fill="none" stroke="#fff" />`;
  s += text(o.right + 4, o.top + 10, 100) + text(o.right + 4, o.bottom - 4, -100);
  levels.forEach(v => {
    s += text(o.right + 3, Math.round(y(v)) + 3, v === 0 ? '0.00' : v);
  });
  o.dates.forEach((d, i) => {
    s += text(o.dateX + i * 64, o.bottom + 12, d);
    s += `<path d="M${o.dateX + 1 + i * 64} ${o.bottom}v4" stroke="#fff" />`;
  });
  s += o.after || '';
  document.getElementById(id).innerHTML = s;
}

function priceBox(x, y, s) {
  return `<rect x="${x}" y="${y}" width="36" height="11" fill="#fff" />` + text(x + 4, y + 9, s, '#000');
}

function strip(right, tri, height, y, s) {
  return `<svg x="4" y="4" width="${right - 4}" height="${height}">${text(15, y, s)}<path d="M3 ${y - 6}h8l-4 5z" fill="#fff" /><path d="M0 4.500H${right}" stroke="#778899" /><path d="M${tri} 0h9l-4 5z" fill="#778899" /></svg>`;
}

wpr('usdjpy', {
  left: 0, right: 181.5, top: 11.5, bottom: 283.5, zero: 148, unit: 1.35, x0: 0, step: 8,
  high: [-37.5, -40, -46.7, -39.5, -17, -5.7, -29.6, -9, 52, 47, 42.5, 29.6, 23, 36, 42.5, 86, 71],
  mid: [-79, -80, -79, -80, -63, -54, -74.5, -61.5, 10, -6.5, -13, -22.7, -31.6, -34.6, -28.6, -4, -4.5],
  low: [-98, -99, -93, -97, -82.5, -87, -95.5, -91, -53, -61, -75, -77.5, -74.5, -77, -86.4, -54, -58.5],
  label: 'JPY:', labelX: 141, labelY: 166, vlines: [151.5],
  caption: 'KuklovodWPR -58.5761 -4.2385 70.5193',
  dateX: -2, dates: ['5 May 2017', '17 May 2017', '29 May 2017'],
  before: strip(181, 138, 6, 11, 'USDJPY,Daily&nbsp; 111.29 111.46 111.16 111.35'),
  after: priceBox(183, 3, '111.35')
});

wpr('gbpusd', {
  left: 1.5, right: 213.5, top: 11.5, bottom: 285.5, zero: 149, unit: 1.363, x0: 2, step: 16,
  high: [56, 88.5, 46.5, 92, 65.5, 29.6, 27.4, -3.4, -55, -34.7],
  mid: [4, 3, 1, 15, -9.5, -34, -52.6, -53.5, -85, -68],
  low: [-86, -91.4, -77.5, -83, -93, -76.5, -95.6, -95, -95, -86],
  label: 'GBP: -', labelX: 152, labelY: 167, vlines: [194.5],
  caption: 'KuklovodWPR -86.0140 -67.6837 -34.3643',
  dateX: 2, dates: ['16 May 2017', '22 May 2017', '26 May 2017'],
  before: strip(213, 160, 6, 11, 'GBPUSD,Daily&nbsp; 1.2811 1.2844 1.2800 1.2841'),
  after: priceBox(215, 2, '1.2841')
});

wpr('eurusd', {
  left: 1.5, right: 237.5, top: 21.5, bottom: 286.5, zero: 154, unit: 1.32, x0: 2, step: 8,
  high: [81.5, 88, 96, 86, 94.7, 90.4, 86, 98.7, 89, 96.7, 82, 70, 74.5, 58, 14, 30, 4.5, -19.4, -24, -27.8, 1, 82.8, 50.7],
  mid: [7, 12.6, 8, -12, 22.7, 4.5, -10, 22.7, 37, 42.7, 40.6, 24.7, 4.5, -12, -44.7, -16.4, -52, -64.4, -50, -65, -43.4, -37, -41.4],
  low: [-95, -94.4, -74.5, -90.7, -67, -96.5, -99.5, -84.6, -80.6, -77.5, -58.8, -60.4, -80.6, -92, -98.5, -74.5, -99, -90.7, -70.7, -99, -82, -89.6, -93],
  label: 'USD:', labelX: 183, labelY: 171, vtop: 3, vlines: [18.5, 202.5],
  caption: 'KuklovodWPR -93.8224 -41.5607 50.7353',
  dateX: 1, dates: ['27 Apr 2017', '9 May 2017', '19 May 2017'],
  before: strip(237, 183, 16, 11, 'EURUSD,Daily&nbsp; 1.1177 1.1189 1.1161 1.1179'),
  after: priceBox(238, 1, '1.1179') + text(242, 20, '1.0895')
});

// candles: bar index, wick top, body top, body bottom, wick bottom, filled
const candles = [
  [0, 437, 496, 513, 522, 0], [1, 428, 453, 496, 582, 1], [2, 445, 487, 504, 531, 0], [3, 300, 300, 470, 548, 0],
  [6, 335, 335, 352, 352, 1], [7, 225, 309, 343, 343, 0], [8, 267, 284, 318, 370, 0], [9, 267, 276, 343, 370, 1],
  [10, 233, 259, 335, 335, 0], [11, 38, 140, 250, 277, 0], [12, 64, 98, 132, 175, 0]
];

let price = '<path d="M2 98.5H578" stroke="#778899" /><path d="M2 181H578" stroke="#ff0" stroke-width="4" />';
price += '<svg x="2" y="0" width="576" height="600"><g stroke="#0f0">';
candles.forEach(([i, wt, t, b, wb, full]) => {
  const x = i * 32 + 0.5;
  price += `<path d="M${x} ${wt}V${t}M${x} ${b}V${wb}" /><rect x="${x - 12}" y="${t + 0.5}" width="24" height="${b - t}" fill="${full ? '#fff' : 'none'}" />`;
});
price += '</g></svg>';
price += '<path d="M4 8h8l-4 5z" fill="#fff" /><path d="M12 23.500H167" stroke="#ccc" /><path d="M457 3h10l-5 6z" fill="#778899" />';
price += text(17, 15, 'GBPJPY,H1&nbsp; 142.95 143.03 142.90 142.99') + text(560, 16, 'ArgoAverager 3.0', '#fff', 'text-anchor="end"');
price += '<svg x="561" y="6" width="13" height="13" color="#fff"><use href="#smiley" width="13" height="13" /></svg>';
price += text(577, 179, '23.6', '#ff0', 'text-anchor="end"');
for (let i = 0; i < 13; i++) {
  const y = Math.round(47 + i * 42.4);
  price += text(584, y + 4, (143.05 - i * 0.05).toFixed(2)) + `<path d="M579 ${y + 0.5}h3" stroke="#fff" />`;
}
price += priceBox(580, 93, '142.99');

wpr('gbpjpy', {
  left: 1.5, right: 578.5, top: 599.5, bottom: 833.5, zero: 717, unit: 1.167, x0: 2, step: 32,
  high: [-42.3, -18, -7, 23.4, 30, 40.6, 75, 88.3, 90, 73, 78.6, 88, 97],
  mid: [-66.6, -43, -40.3, -19.4, -18, -19.7, -9, 17, 31, 29.7, 48.3, 63.4, 69.4],
  low: [-84.3, -61.7, -58.3, -43.7, -48, -55.7, -62.6, -53, -28.3, -31.7, -1, 22.3, 8],
  label: 'GBP: 69.13', labelX: 396, labelY: 736, vtop: 3, vlines: [34.5],
  caption: 'KuklovodWPR 7.5472 69.1286 97.0149',
  dateX: 1, dates: ['26 May 2017', '29 May 01:00', '29 May 03:00', '29 May 05:00', '29 May 07:00', '29 May 09:00', '29 May 11:00'],
  after: price
});
```
